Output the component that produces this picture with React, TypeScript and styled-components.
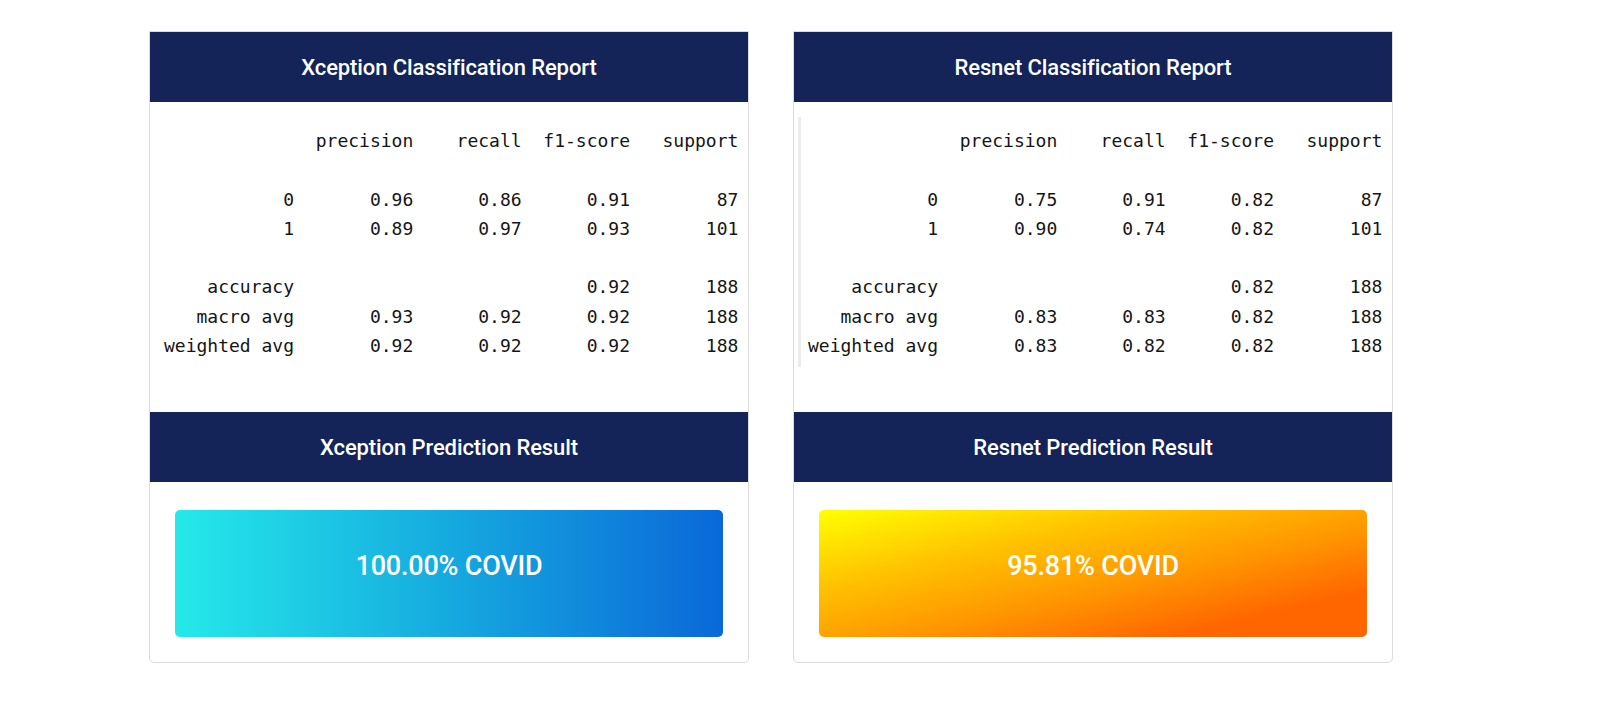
import React from 'react'
import styled, { createGlobalStyle } from 'styled-components'

const GlobalStyle = createGlobalStyle`
    html, body {
        margin: 0;
        padding: 0;
        background: #ffffff;
    }
    body {
        font-family: Roboto, "Noto Sans", Arial, sans-serif;
    }
`

interface ModelResult {
	name: string
	report: string[]
	framed: boolean
	score: string
	variant: 'blue' | 'orange'
}

const models: ModelResult[] = [
	{
		name: 'Xception',
		framed: false,
		score: '100.00% COVID',
		variant: 'blue',
		report: [
			'              precision    recall  f1-score   support',
			'',
			'           0       0.96      0.86      0.91        87',
			'           1       0.89      0.97      0.93       101',
			'',
			'    accuracy                           0.92       188',
			'   macro avg       0.93      0.92      0.92       188',
			'weighted avg       0.92      0.92      0.92       188',
		],
	},
	{
		name: 'Resnet',
		framed: true,
		score: '95.81% COVID',
		variant: 'orange',
		report: [
			'              precision    recall  f1-score   support',
			'',
			'           0       0.75      0.91      0.82        87',
			'           1       0.90      0.74      0.82       101',
			'',
			'    accuracy                           0.82       188',
			'   macro avg       0.83      0.83      0.82       188',
			'weighted avg       0.83      0.82      0.82       188',
		],
	},
]

const gradients = {
	blue: 'linear-gradient(to right, #25e9e9 0%, #17b0e0 45%, #0a68d8 100%)',
	orange: 'linear-gradient(to bottom right, #ffff00 0%, #ffc400 30%, #ff9500 58%, #ff6600 82%, #ff6600 100%)',
}

const Page = styled.div`
    display: flex;
    gap: 44px;
    padding: 31px 0 0 149px;
    min-height: 705px;
    box-sizing: border-box;
`

const Card = styled.section`
    width: 600px;
    height: 632px;
    box-sizing: border-box;
    border: 1px solid #dcdcdc;
    border-radius: 0 0 5px 5px;
    background: #ffffff;
    display: flex;
    flex-direction: column;
`

const CardHeader = styled.h2`
    margin: 0;
    height: 70px;
    display: flex;
    align-items: center;
    justify-content: center;
    background: #142458;
    color: #ffffff;
    font-family: Roboto, "Noto Sans", sans-serif;
    font-weight: 500;
    font-size: 22px;
    letter-spacing: -0.1px;
`

const ReportArea = styled.div`
    height: 310px;
    box-sizing: border-box;
    padding: 15px 0 0 4px;
`

const Report = styled.pre<{ $framed: boolean }>`
    margin: 0;
    height: 250px;
    box-sizing: border-box;
    padding: 9px 0 0 7px;
    border-left: 3px solid ${props => (props.$framed ? '#ececec' : 'transparent')};
    font-family: "DejaVu Sans Mono", "Liberation Mono", monospace;
    font-size: 18px;
    line-height: 29.3px;
    color: #151515;
    white-space: pre;
`

const ResultArea = styled.div`
    flex: 1;
    padding: 28px 25px 25px;
    display: flex;
`

const ResultBox = styled.div<{ $variant: 'blue' | 'orange' }>`
    flex: 1;
    border-radius: 5px;
    background: ${props => gradients[props.$variant]};
    display: flex;
    align-items: center;
    justify-content: center;
`

const ResultText = styled.h3`
    margin: 0 0 16px;
    color: #ffffff;
    font-family: Roboto, "Noto Sans", sans-serif;
    font-weight: 500;
    font-size: 27px;
    letter-spacing: -0.2px;
`

const ModelCard = ({ model }: { model: ModelResult }) => (
	<Card>
		<CardHeader>{model.name} Classification Report</CardHeader>
		<ReportArea>
			<Report $framed={model.framed}>{model.report.join('\n')}</Report>
		</ReportArea>
		<CardHeader>{model.name} Prediction Result</CardHeader>
		<ResultArea>
			<ResultBox $variant={model.variant}>
				<ResultText>{model.score}</ResultText>
			</ResultBox>
		</ResultArea>
	</Card>
)

const App = () => (
	<>
		<GlobalStyle />
		<Page>
			{models.map(model => (
				<ModelCard key={model.name} model={model} />
			))}
		</Page>
	</>
)

export default App
